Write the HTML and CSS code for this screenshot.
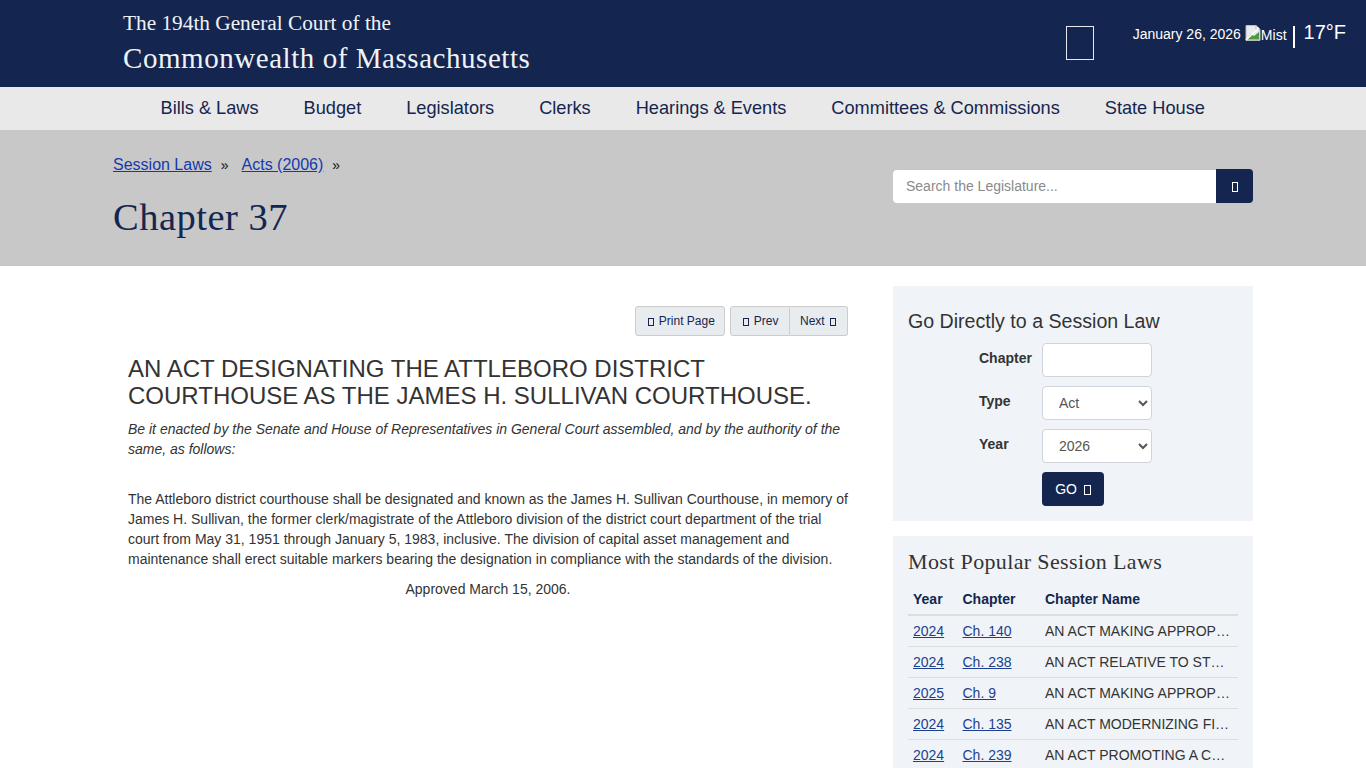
FILE: index.html
```html
<!DOCTYPE html>
<html lang="en">
<head>
  <meta charset="UTF-8">
  <meta name="viewport" content="width=device-width, initial-scale=1.0">
  <title>Chapter 37 - Session Laws</title>
  <link rel="stylesheet" href="styles.css">
</head>
<body>

  <header class="site-header">
    <a class="brand" href="#">
      <span class="brand-small">The 194th General Court of the</span>
      <span class="brand-large">Commonwealth of Massachusetts</span>
    </a>
    <div class="header-right">
      <span class="menu-box"></span>
      <span class="date">January 26, 2026</span>
      <svg class="broken-img" width="16" height="16" viewBox="0 0 16 16">
        <path d="M1 0.5h10l4 4v11H1z" fill="#e8ecef" stroke="#b8bcc0"/>
        <path d="M11 0.5v4h4" fill="#fff" stroke="#b8bcc0"/>
        <path d="M2 14l4-5 3 2 5-4v7.500H2z" fill="#4f9a3c"/>
        <path d="M1 15L14 3" stroke="#fff" stroke-width="1.500"/>
      </svg>
      <span class="mist">Mist</span>
      <span class="divider"></span>
      <span class="temp">17°F</span>
    </div>
  </header>

  <nav class="main-nav">
    <a href="#">Bills &amp; Laws</a>
    <a href="#">Budget</a>
    <a href="#">Legislators</a>
    <a href="#">Clerks</a>
    <a href="#">Hearings &amp; Events</a>
    <a href="#">Committees &amp; Commissions</a>
    <a href="#">State House</a>
  </nav>

  <section class="title-band">
    <div>
      <div class="breadcrumb">
        <a href="#">Session Laws</a><span class="sep">»</span><a href="#">Acts (2006)</a><span class="sep">»</span>
      </div>
      <h1>Chapter 37</h1>
    </div>
    <form class="search">
      <input type="text" placeholder="Search the Legislature...">
      <button type="button"><span class="tofu"></span></button>
    </form>
  </section>

  <main class="content">
    <article class="law">
      <div class="toolbar">
        <a class="tool-btn print-btn" href="#"><span class="tofu"></span> Print Page</a>
        <div class="btn-group">
          <a class="tool-btn prev-btn" href="#"><span class="tofu"></span> Prev</a>
          <a class="tool-btn next-btn" href="#">Next <span class="tofu"></span></a>
        </div>
      </div>
      <h2>AN ACT DESIGNATING THE ATTLEBORO DISTRICT COURTHOUSE AS THE JAMES H. SULLIVAN COURTHOUSE.</h2>
      <p class="enact"><em>Be it enacted by the Senate and House of Representatives in General Court assembled, and by the authority of the same, as follows:</em></p>
      <p class="body-text">The Attleboro district courthouse shall be designated and known as the James H. Sullivan Courthouse, in memory of James H. Sullivan, the former clerk/magistrate of the Attleboro division of the district court department of the trial court from May 31, 1951 through January 5, 1983, inclusive. The division of capital asset management and maintenance shall erect suitable markers bearing the designation in compliance with the standards of the division.</p>
      <p class="approved">Approved March 15, 2006.</p>
    </article>

    <aside class="sidebar">
      <div class="panel go-panel">
        <h3>Go Directly to a Session Law</h3>
        <form class="go-form">
          <label>Chapter</label>
          <input type="text">
          <label>Type</label>
          <select><option>Act</option><option>Resolve</option></select>
          <label>Year</label>
          <select><option>2026</option><option>2025</option></select>
          <button type="button" class="go-btn">GO <span class="tofu"></span></button>
        </form>
      </div>

      <div class="panel popular-panel">
        <h3 class="serif-head">Most Popular Session Laws</h3>
        <table>
          <thead>
            <tr><th class="col-year">Year</th><th class="col-chapter">Chapter</th><th>Chapter Name</th></tr>
          </thead>
          <tbody>
            <tr><td><a href="#">2024</a></td><td><a href="#">Ch. 140</a></td><td class="name">AN ACT MAKING APPROP…</td></tr>
            <tr><td><a href="#">2024</a></td><td><a href="#">Ch. 238</a></td><td class="name">AN ACT RELATIVE TO ST…</td></tr>
            <tr><td><a href="#">2025</a></td><td><a href="#">Ch. 9</a></td><td class="name">AN ACT MAKING APPROP…</td></tr>
            <tr><td><a href="#">2024</a></td><td><a href="#">Ch. 135</a></td><td class="name">AN ACT MODERNIZING FI…</td></tr>
            <tr><td><a href="#">2024</a></td><td><a href="#">Ch. 239</a></td><td class="name">AN ACT PROMOTING A C…</td></tr>
          </tbody>
        </table>
      </div>
    </aside>
  </main>

</body>
</html>
```

FILE: styles.css
```css
* {
  box-sizing: border-box;
}
body {
  margin: 0;
  font-family: "Liberation Sans", Arial, sans-serif;
  font-size: 14px;
  line-height: 20px;
  color: #333;
  background: #fff;
}

/* header */
.site-header {
  display: flex;
  justify-content: space-between;
  height: 87px;
  padding: 0 20px 0 123px;
  background: #14264f;
  color: #fff;
}
.brand {
  font-family: "Liberation Serif", Georgia, serif;
  color: #f0f2f6;
  text-decoration: none;
}
.brand-small {
  display: block;
  margin-top: 11px;
  font-size: 21.3px;
  line-height: 24px;
}
.brand-large {
  display: block;
  margin-top: 6px;
  font-size: 29px;
  line-height: 34px;
  letter-spacing: 0.55px;
}
.header-right {
  display: flex;
  align-items: flex-start;
}
.menu-box {
  width: 28px;
  height: 34px;
  margin: 26px 39px 0 0;
  border: 1px solid #e6e9f0;
}
.date {
  margin-top: 24px;
  margin-right: 4px;
}
.broken-img {
  margin-top: 25px;
}
.mist {
  margin-top: 25px;
  line-height: 20px;
}
.divider {
  width: 2px;
  height: 22px;
  margin: 26px 9px 0 6px;
  background: #fff;
}
.temp {
  margin-top: 20px;
  font-size: 20px;
  line-height: 24px;
}

/* nav */
.main-nav {
  display: flex;
  gap: 45px;
  height: 44px;
  padding-left: 160.5px;
  background: #e9e9e9;
  border-bottom: 1px solid #c8c8c8;
}
.main-nav a {
  font-size: 18.2px;
  line-height: 42px;
  color: #14264f;
  text-decoration: none;
}

/* title band */
.title-band {
  display: flex;
  justify-content: space-between;
  height: 135px;
  padding: 0 113px;
  background: #c8c8c8;
}
.breadcrumb {
  margin-top: 24px;
  font-size: 16px;
  line-height: 20px;
  color: #111;
}
.breadcrumb a {
  color: #1339b0;
}
.sep {
  margin: 0 13px 0 9px;
  font-size: 14px;
}
.title-band h1 {
  margin: 20px 0 0;
  font-family: "Liberation Serif", Georgia, serif;
  font-size: 38.5px;
  font-weight: 400;
  line-height: 44px;
  letter-spacing: 0.5px;
  color: #14264f;
}
.search {
  display: flex;
  align-items: center;
  width: 360px;
  height: 34px;
  margin-top: 38px;
}
.search input {
  width: 323px;
  height: 33px;
  padding: 0 13px;
  border: 0;
  border-radius: 4px 0 0 4px;
  font-family: inherit;
  font-size: 14px;
  background: #fff;
}
.search input::placeholder {
  color: #8a8a8a;
}
.search button {
  width: 37px;
  height: 34px;
  padding: 0;
  border: 0;
  border-radius: 0 4px 4px 0;
  background: #14264f;
  color: #fff;
}
.search .tofu {
  height: 10px;
  vertical-align: middle;
}
.tofu {
  display: inline-block;
  width: 6px;
  height: 8px;
  border: 1px solid currentColor;
  vertical-align: -1px;
}

/* content */
.content {
  display: flex;
  justify-content: space-between;
  padding: 20px 113px 0 128px;
}
.law {
  width: 720px;
  padding-top: 20px;
}
.toolbar {
  display: flex;
  justify-content: flex-end;
  gap: 5px;
}
.btn-group {
  display: flex;
}
.tool-btn {
  display: block;
  height: 30px;
  padding: 0 9px 0 12px;
  border: 1px solid #ccc;
  border-radius: 3px;
  background: #e9ecef;
  font-size: 12px;
  line-height: 28px;
  color: #14264f;
  text-decoration: none;
}
.tool-btn .tofu {
  margin-right: 1.5px;
}
.print-btn {
  width: 90px;
}
.prev-btn {
  width: 60px;
  border-radius: 3px 0 0 3px;
}
.next-btn {
  width: 58px;
  padding-left: 10px;
  border-left: 0;
  border-radius: 0 3px 3px 0;
}
.next-btn .tofu {
  margin: 0 0 0 1.5px;
}
.law h2 {
  margin: 19px 0 0;
  font-size: 24px;
  font-weight: 400;
  line-height: 27px;
  color: #333;
}
.enact {
  margin: 10px 0 0;
}
.body-text {
  margin: 30px 0 0;
}
.approved {
  margin: 10px 0 0;
  text-align: center;
}

/* sidebar */
.sidebar {
  width: 360px;
}
.panel {
  padding: 0 15px;
  background: #f0f4f8;
}
.go-panel {
  height: 235px;
  padding-top: 21px;
}
.go-panel h3 {
  margin: 0;
  font-size: 19.6px;
  font-weight: 400;
  line-height: 28px;
  color: #333;
}
.go-form {
  display: grid;
  grid-template-columns: 63px 110px;
  grid-auto-rows: 34px;
  row-gap: 9px;
  margin: 8px 0 0 71px;
}
.go-form label {
  font-weight: 700;
  line-height: 30px;
}
.go-form input,
.go-form select {
  width: 110px;
  height: 34px;
  padding: 0 12px;
  border: 1px solid #ced4da;
  border-radius: 4px;
  background: #fff;
  font-family: inherit;
  font-size: 14px;
  color: #555;
}
.go-btn {
  grid-column: 2;
  width: 62px;
  height: 34px;
  padding: 0;
  border: 0;
  border-radius: 4px;
  background: #14264f;
  color: #fff;
  font-family: inherit;
  font-size: 14px;
}
.go-btn .tofu {
  width: 7px;
  height: 10px;
  margin-left: 3px;
}
.popular-panel {
  margin-top: 15px;
  padding-top: 12px;
}
.serif-head {
  margin: 0;
  font-family: "Liberation Serif", Georgia, serif;
  font-size: 22px;
  font-weight: 400;
  line-height: 28px;
  letter-spacing: 0.36px;
  color: #333;
}
table {
  width: 100%;
  margin-top: 8px;
  border-collapse: collapse;
  table-layout: fixed;
}
th {
  padding: 5px;
  border-bottom: 2px solid #ddd;
  text-align: left;
  color: #14264f;
}
td {
  height: 31px;
  padding: 0 5px;
  border-top: 1px solid #ddd;
  white-space: nowrap;
}
td a {
  color: #1d3f8f;
}
.col-year {
  width: 49.5px;
}
.col-chapter {
  width: 82.5px;
}
```
